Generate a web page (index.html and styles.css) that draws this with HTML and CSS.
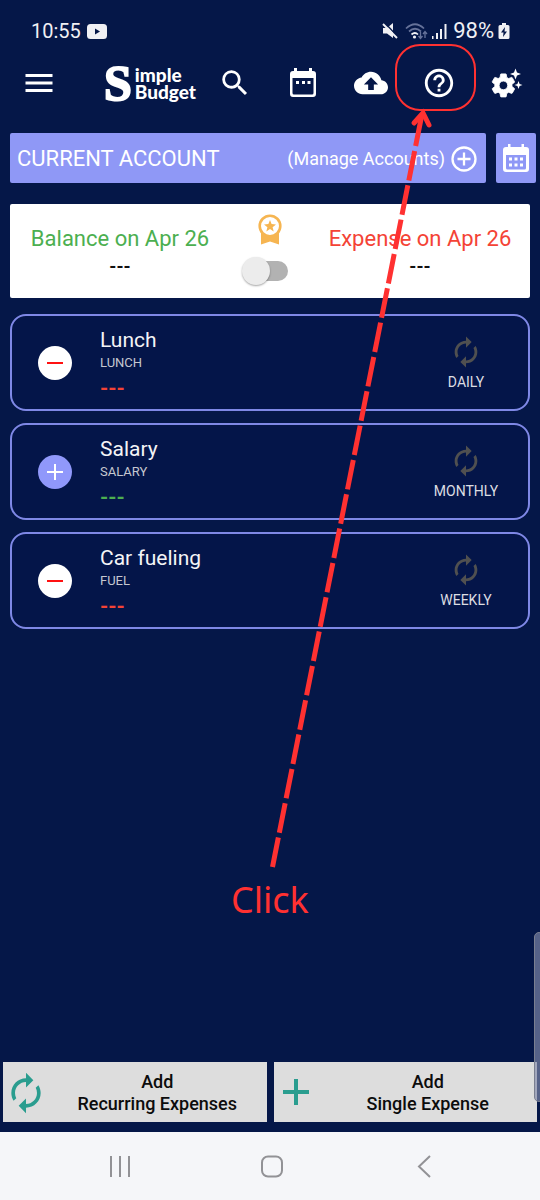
FILE: index.html
```html
<!DOCTYPE html>
<html lang="en">
<head>
<meta charset="utf-8">
<meta name="viewport" content="width=device-width, initial-scale=1">
<title>Simple Budget</title>
<link rel="stylesheet" href="styles.css">
</head>
<body>
<svg class="defs" aria-hidden="true">
  <symbol id="renew" viewBox="0 0 24 24"><path d="M12 6v3l4-4-4-4v3c-4.42 0-8 3.58-8 8 0 1.57.46 3.03 1.24 4.26L6.7 14.8c-.45-.83-.7-1.79-.7-2.8 0-3.31 2.69-6 6-6zm6.76 1.74L17.3 9.2c.44.84.7 1.79.7 2.8 0 3.31-2.69 6-6 6v-3l-4 4 4 4v-3c4.42 0 8-3.58 8-8 0-1.57-.46-3.03-1.24-4.26z"/></symbol>
</svg>
<div class="app">
  <div class="status">
    <span class="time">10:55</span>
    <svg class="yt" viewBox="0 0 20 15"><rect width="20" height="15" rx="3.5" fill="#f0f0f4"/><path d="M8 4.5v6l5-3z" fill="#051748"/></svg>
    <div class="status-right">
      <svg width="16" height="16" viewBox="0 0 16 16"><path d="M1 5h4l6-5v15l-6-4.500H1z" fill="#f0f0f4"/><path d="M3 0l13 14" stroke="#051748" stroke-width="1.500"/><path d="M1 1l14 14" stroke="#f0f0f4" stroke-width="2"/></svg>
      <svg class="wifi" width="23" height="17" viewBox="0 0 23 17" fill="none" stroke-width="1.700"><path d="M1 5.500Q10 -3 19 5.500M4 8.500Q10 3 16 8.500" stroke="#66729a"/><path d="M6.500 11.500Q10 8.500 13 11.500" stroke="#f0f0f4"/><circle cx="9.500" cy="14" r="1.600" fill="#f0f0f4"/><path d="M15.500 9v6M13.500 13l2 2.500 2-2.500M20 15V9M18 11l2-2.500 2 2.500" stroke="#66729a" stroke-width="1.300"/></svg>
      <svg class="signal" width="15" height="15" viewBox="0 0 15 15" fill="#f0f0f4"><path d="M0 12h1.500v3H0zM4 9h2v6H4zM8 5h2v10H8zM12.500 0h2v15h-2z"/></svg>
      <span class="percent">98%</span>
      <svg width="12" height="16" viewBox="0 0 12 16"><path d="M4 0h4v2h2q1.500 0 1.500 1.500v11Q11.500 16 10 16H2Q.5 16 .5 14.500v-11Q.5 2 2 2h2z" fill="#f0f0f4"/><path d="M7 4L3 9.500h2.500L5 14l4-5.500H6.500z" fill="#051748"/></svg>
    </div>
  </div>

  <header class="toolbar">
    <button class="menu" aria-label="Menu"><svg width="36" height="36" viewBox="0 0 24 24"><path d="M3 18h18v-2H3v2zm0-5h18v-2H3v2zm0-7v2h18V6H3z"/></svg></button>
    <div class="logo"><span class="logo-s">S</span><span class="logo-words"><span>imple</span><span>Budget</span></span></div>
    <button class="tool" aria-label="Search"><svg width="34" height="34" viewBox="0 0 24 24"><path d="M15.500 14h-.79l-.28-.27A6.471 6.471 0 0 0 16 9.500 6.500 6.500 0 1 0 9.500 16c1.610 0 3.090-.59 4.230-1.570l.27.28v.79l5 4.990L20.490 19l-4.990-5zm-6 0C7.010 14 5 11.990 5 9.500S7.010 5 9.500 5 14 7.010 14 9.500 11.990 14 9.500 14z"/></svg></button>
    <button class="tool" aria-label="Calendar"><svg width="28" height="30" viewBox="0 0 28 30"><path fill-rule="evenodd" d="M5 0h3v3h12V0h3v3h1q3 0 3 3v20q0 3-3 3H4q-3 0-3-3V6q0-3 3-3h1zM3.500 10v15q0 1.500 1.500 1.500h18q1.500 0 1.500-1.500V10z"/><path d="M7 13h3v3H7zM13 13h3v3h-3zM18.500 13h3v3h-3z"/></svg></button>
    <button class="tool" aria-label="Back up"><svg width="34" height="34" viewBox="0 0 24 24"><path d="M19.350 10.040C18.670 6.590 15.640 4 12 4 9.110 4 6.600 5.640 5.350 8.040 2.340 8.360 0 10.910 0 14c0 3.310 2.690 6 6 6h13c2.760 0 5-2.240 5-5 0-2.640-2.050-4.780-4.650-4.960zM14 13v4h-4v-4H7l5-5 5 5h-3z"/></svg></button>
    <button class="tool" aria-label="Help"><svg width="34" height="34" viewBox="0 0 24 24"><path d="M11 18h2v-2h-2v2zm1-16C6.480 2 2 6.480 2 12s4.480 10 10 10 10-4.480 10-10S17.520 2 12 2zm0 18c-4.410 0-8-3.590-8-8s3.590-8 8-8 8 3.590 8 8-3.590 8-8 8zm0-14c-2.210 0-4 1.790-4 4h2c0-1.100.9-2 2-2s2 .9 2 2c0 2-3 1.750-3 5h2c0-2.250 3-2.500 3-5 0-2.210-1.790-4-4-4z"/></svg></button>
    <button class="tool" aria-label="Settings"><svg width="34" height="34" viewBox="0 0 34 34"><path transform="translate(-1 5) scale(1.200)" stroke="#fff" stroke-width=".7" d="M19.140 12.940c.04-.3.06-.61.06-.94 0-.32-.02-.64-.07-.94l2.030-1.580c.18-.14.23-.41.12-.61l-1.920-3.320c-.12-.22-.37-.29-.59-.22l-2.390.96c-.5-.38-1.030-.7-1.620-.94l-.36-2.540c-.04-.24-.24-.41-.48-.41h-3.840c-.24 0-.43.17-.47.41l-.36 2.540c-.59.24-1.130.57-1.620.94l-2.390-.96c-.22-.08-.47 0-.59.22L2.740 8.870c-.12.21-.08.47.12.61l2.030 1.580c-.05.3-.09.63-.09.94s.02.64.07.94l-2.030 1.580c-.18.14-.23.41-.12.61l1.920 3.320c.12.22.37.29.59.22l2.390-.96c.5.38 1.030.7 1.620.94l.36 2.540c.05.24.24.41.48.41h3.840c.24 0 .44-.17.47-.41l.36-2.540c.59-.24 1.130-.56 1.620-.94l2.390.96c.22.08.47 0 .59-.22l1.920-3.320c.12-.22.07-.47-.12-.61l-2.010-1.580zM12 15.600c-1.980 0-3.600-1.620-3.600-3.600s1.620-3.600 3.600-3.600 3.600 1.620 3.600 3.600-1.620 3.600-3.600 3.600z"/><path stroke="#051748" stroke-width="1.500" paint-order="stroke" d="M25.500 2.500l1.500 4 4 1.500-4 1.500-1.500 4-1.500-4-4-1.500 4-1.500zM28.500 15l1.100 2.900 2.900 1.100-2.900 1.100-1.100 2.900-1.100-2.900-2.900-1.100 2.900-1.100z"/></svg></button>
  </header>

  <main class="content">
    <div class="account-row">
      <button class="account">
        <span class="account-name">CURRENT ACCOUNT</span>
        <span class="manage">(Manage Accounts)</span>
        <svg width="26" height="26" viewBox="0 0 26 26" fill="none" stroke="#fff" stroke-width="2.300"><circle cx="13" cy="13" r="11.500"/><path d="M13 6.500v13M6.500 13h13"/></svg>
      </button>
      <button class="month" aria-label="Monthly view"><svg width="26" height="29" viewBox="0 0 26 29" fill="#fff"><path fill-rule="evenodd" d="M5 0h2.500v3h11V0H21v3h2q3 0 3 3v19q0 3-3 3H3q-3 0-3-3V6q0-3 3-3h2zM3 11v13q0 1.500 1.500 1.500h17q1.500 0 1.500-1.500V11z"/><path d="M6 13.500h3v3H6zM11.500 13.500h3v3h-3zM17 13.500h3v3h-3zM6 19.500h3v3H6zM11.500 19.500h3v3h-3zM17 19.500h3v3h-3z"/></svg></button>
    </div>

    <section class="summary">
      <div class="total balance"><span>Balance on Apr 26</span><b>---</b></div>
      <div class="middle">
        <svg width="24" height="31" viewBox="0 0 24 31"><path d="M3 18h18v12.500l-9-3-9 3z" fill="#f6b551"/><circle cx="12" cy="12" r="10.300" fill="#fff" stroke="#f6b551" stroke-width="2.600"/><path d="M12 6l1.600 4.100 4.400.3-3.400 2.800 1.100 4.300-3.700-2.400-3.700 2.400 1.100-4.300L6 10.400l4.400-.3z" fill="#f6b551"/></svg>
        <input class="switch" type="checkbox" role="switch" aria-label="Show totals">
      </div>
      <div class="total expense"><span>Expense on Apr 26</span><b>---</b></div>
    </section>

    <ul class="entries">
      <li class="entry">
        <svg class="sign" viewBox="0 0 34 34"><circle cx="17" cy="17" r="17" fill="#fff"/><path d="M9 17h16" stroke="#f11" stroke-width="2"/></svg>
        <div class="info"><span class="name">Lunch</span><span class="category">LUNCH</span><b class="amount out">---</b></div>
        <div class="repeat"><svg><use href="#renew"/></svg><span>DAILY</span></div>
      </li>
      <li class="entry">
        <svg class="sign" viewBox="0 0 34 34"><circle cx="17" cy="17" r="17" fill="#9098fb"/><path d="M9 17h16M17 9v16" stroke="#fff" stroke-width="2"/></svg>
        <div class="info"><span class="name">Salary</span><span class="category">SALARY</span><b class="amount in">---</b></div>
        <div class="repeat"><svg><use href="#renew"/></svg><span>MONTHLY</span></div>
      </li>
      <li class="entry">
        <svg class="sign" viewBox="0 0 34 34"><circle cx="17" cy="17" r="17" fill="#fff"/><path d="M9 17h16" stroke="#f11" stroke-width="2"/></svg>
        <div class="info"><span class="name">Car fueling</span><span class="category">FUEL</span><b class="amount out">---</b></div>
        <div class="repeat"><svg><use href="#renew"/></svg><span>WEEKLY</span></div>
      </li>
    </ul>
  </main>

  <div class="actions">
    <button class="action"><svg width="44" height="44"><use href="#renew"/></svg><span>Add<br>Recurring Expenses</span></button>
    <button class="action"><svg width="44" height="44" viewBox="0 0 44 44"><path d="M19 8h4v11h11v4H23v11h-4V23H8v-4h11z"/></svg><span>Add<br>Single Expense</span></button>
    <div class="edge-handle"></div>
  </div>

  <nav class="system-nav">
    <button aria-label="Recents"><svg width="24" height="24" viewBox="0 0 24 24"><path d="M3 1v21M12 1v21M21 1v21"/></svg></button>
    <button aria-label="Home"><svg width="24" height="24" viewBox="0 0 24 24"><rect x="2" y="1.500" width="20" height="20" rx="6"/></svg></button>
    <button aria-label="Back"><svg width="24" height="24" viewBox="0 0 24 24"><path d="M18 1L7 11.500 18 22"/></svg></button>
  </nav>

  <div class="callout">
    <svg width="245" height="824" viewBox="0 0 245 824" fill="none" stroke="#ff3131">
      <rect x="165" y="1" width="79" height="65" rx="24" stroke-width="2"/>
      <path d="M41.500 823L191 70" stroke-width="5" stroke-dasharray="30 5"/>
      <path d="M183 79L192 69 198 81" stroke-width="5" stroke-linecap="round"/>
    </svg>
    <span>Click</span>
  </div>
</div>
</body>
</html>
```
FILE: styles.css
```css
* { box-sizing: border-box; }
body { margin: 0; background: #051748; font-family: Roboto, sans-serif; color: #fff; }
button { border: 0; padding: 0; background: none; color: inherit; font: inherit; cursor: pointer; }
svg { display: block; flex: none; }
.defs { position: absolute; width: 0; height: 0; }
.app { position: relative; display: flex; flex-direction: column; min-height: 100vh; overflow: hidden; }

.status { display: flex; align-items: center; height: 62px; padding: 0 30px 0 31px; color: #f0f0f4; font-size: 20px; }
.yt { width: 20px; height: 15px; margin-left: 6px; }
.status-right { display: flex; align-items: center; gap: 4px; margin-left: auto; }
.wifi { margin-left: 3px; }
.percent { margin: 0 0 0 2px; font-size: 22px; line-height: 24px; }

.toolbar { display: flex; align-items: center; height: 42px; }
.toolbar svg { fill: #fff; }
.menu { display: grid; place-items: center; width: 78px; height: 42px; }
.logo { display: flex; align-items: center; gap: 3px; margin: 0 auto 0 26px; }
.logo-s { font: bold 50px/42px "Liberation Serif", serif; -webkit-text-stroke: 2px #fff; }
.logo-words { display: flex; flex-direction: column; font: 900 19px/17px Lato, sans-serif; }
.tool { display: grid; place-items: center; width: 68px; height: 42px; }
.tool:last-child { width: 67px; }

.content { flex: 1; padding-top: 29px; }
.account-row { display: flex; gap: 10px; margin: 0 4px 0 10px; }
.account { display: flex; flex: 1; align-items: center; height: 50px; padding: 1px 9px 0 7px; border-radius: 2px; background: #8f98f6; }
.account-name { font-size: 22px; }
.manage { margin: 0 6px 0 auto; font-size: 18px; }
.month { display: grid; place-items: center; width: 40px; height: 50px; border-radius: 2px; background: #8f98f6; }

.summary { display: grid; grid-template-columns: 1fr 80px 1fr; margin: 21px 10px 16px; padding: 10px 0; min-height: 94px; border-radius: 2px; background: #fff; }
.total { display: flex; flex-direction: column; align-items: center; padding-top: 10px; font-size: 22px; line-height: 30px; }
.total b { color: #111; font-size: 18px; line-height: 26px; }
.balance { color: #4caf50; }
.expense { color: #f44336; }
.middle { display: flex; flex-direction: column; align-items: center; gap: 12px; }
.switch { appearance: none; position: relative; width: 36px; height: 20px; margin: 4px 0 0; border-radius: 10px; background: #b2b2b2; }
.switch::before { content: ""; position: absolute; left: -10px; top: -4px; width: 28px; height: 28px; border-radius: 50%; background: #ececec; box-shadow: 0 1px 2px rgba(0, 0, 0, .35); }

.entries { display: flex; flex-direction: column; gap: 12px; margin: 0 10px; padding: 0; list-style: none; }
.entry { display: flex; align-items: center; height: 97px; padding: 0 22px 0 26px; border: 2px solid #7f88e6; border-radius: 16px; background: #041549; }
.sign { width: 34px; height: 34px; }
.info { display: flex; flex: 1; flex-direction: column; margin-left: 28px; padding-top: 4px; }
.name { color: #f4f4f6; font-size: 21px; line-height: 26px; }
.category { color: #c6c8d0; font-size: 13px; line-height: 20px; }
.amount { font-size: 21px; line-height: 30px; }
.out { color: #f44336; }
.in { color: #4caf50; }
.repeat { display: flex; flex-direction: column; align-items: center; gap: 4px; width: 80px; color: #dcdde2; font-size: 14px; line-height: 18px; }
.repeat svg { width: 34px; height: 34px; fill: #505050; }

.actions { position: relative; display: grid; grid-template-columns: 1fr 1fr; gap: 7px; padding: 0 3px 10px; }
.action { display: flex; align-items: center; height: 60px; padding: 1px 0 0 1px; background: #ddd; color: #0c0c0c; font-size: 18px; font-weight: 500; line-height: 22px; }
.action span { flex: 1; }
.action svg { fill: #2a9d8f; }
.edge-handle { position: absolute; right: -4px; bottom: 30px; width: 10px; height: 170px; border: 1px solid #7a7f90; border-radius: 5px; background: rgba(130, 138, 170, .65); }

.system-nav { display: flex; justify-content: center; align-items: center; gap: 128px; height: 68px; padding: 2px 0 0 4px; background: #f5f6f9; }
.system-nav svg { fill: none; stroke: #929296; stroke-width: 2; }

.callout { position: absolute; top: 44px; right: 64px; width: 245px; pointer-events: none; color: #ff3131; font: 36px/64px "Noto Sans", sans-serif; }
```
